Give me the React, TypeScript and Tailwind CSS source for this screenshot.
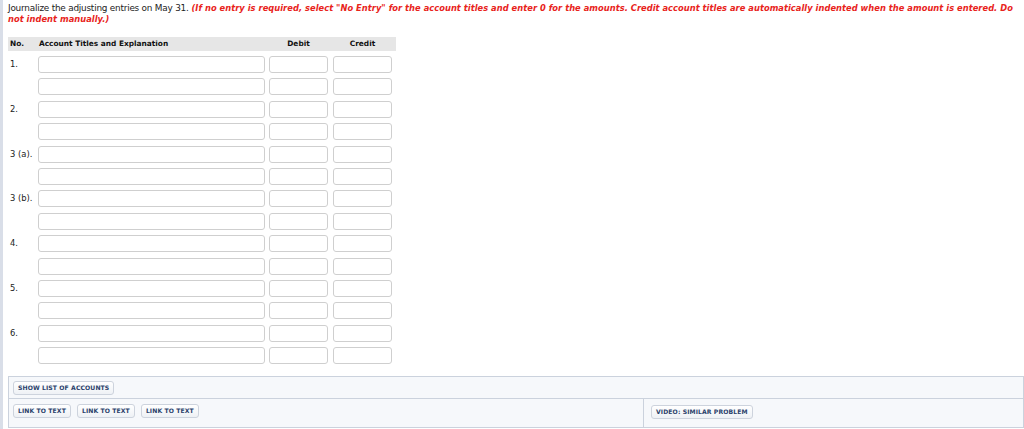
import React from 'react'

const filas = [
  { no: '1.' }, { no: '' },
  { no: '2.' }, { no: '' },
  { no: '3 (a).' }, { no: '' },
  { no: '3 (b).' }, { no: '' },
  { no: '4.' }, { no: '' },
  { no: '5.' }, { no: '' },
  { no: '6.' }, { no: '' },
]

function Boton({ children }: any) {
  return (
    <button className="h-[14px] px-[4px] rounded-[3px] border border-[#cdd3dd] bg-gradient-to-b from-white to-[#eef1f5] text-[6.1px] font-bold uppercase tracking-[0.1px] text-[#2a3f6b] leading-none whitespace-nowrap">
      {children}
    </button>
  )
}

export default function App() {
  return (
    <div className="w-[1024px] h-[429px] bg-white flex font-['DejaVu_Sans',Verdana,sans-serif] overflow-hidden">
      <div className="w-[3px] bg-[#d9dee8] shrink-0" />
      <div className="flex-1 pl-[4px] pt-[3px]">
        {/* INSTRUCCIONES */}
        <p className="text-[8.9px] leading-[11px] text-[#222] pr-[3px] pl-[1px]">
          <span className="tracking-[-0.22px]">Journalize the adjusting entries on May 31.</span>{' '}
          <span className="text-[8.3px] leading-[11px] tracking-[0.04px] text-[#e8231b] font-bold italic">
            (If no entry is required, select "No Entry" for the account titles and enter 0 for the amounts. Credit account titles are automatically indented when the amount is entered. Do not indent manually.)
          </span>
        </p>

        {/* TABLA */}
        <div className="w-[388px] mt-[12px] ml-[1px]">
          <div className="h-[14px] bg-[#e6e6e6] flex items-center text-[7.4px] font-bold text-[#111]">
            <div className="w-[30px] pl-[2px]">No.</div>
            <div className="w-[231px] pl-[1px]">Account Titles and Explanation</div>
            <div className="w-[59px] text-center">Debit</div>
            <div className="w-[5px]" />
            <div className="w-[59px] text-center">Credit</div>
          </div>
          <div className="flex flex-col gap-[5.4px] mt-[5px]">
            {filas.map((f, i) => (
              <div key={i} className="flex h-[17px]">
                <div className="w-[30px] pl-[2px] pt-[3px] text-[8.4px] leading-[10px] text-[#222] whitespace-nowrap">{f.no}</div>
                <input type="text" className="w-[227px] h-[17px] rounded-[3px] border border-[#cfcfcf] bg-white outline-none" />
                <div className="w-[4px]" />
                <input type="text" className="w-[59px] h-[17px] rounded-[3px] border border-[#cfcfcf] bg-white outline-none" />
                <div className="w-[5px]" />
                <input type="text" className="w-[59px] h-[17px] rounded-[3px] border border-[#cfcfcf] bg-white outline-none" />
              </div>
            ))}
          </div>
        </div>

        {/* PIE */}
        <div className="mt-[12px] ml-[1px] border border-[#cbd2dd] bg-[#f6f8fb]">
          <div className="h-[22px] flex items-center pl-[4px] border-b border-[#cbd2dd]">
            <Boton>Show list of accounts</Boton>
          </div>
          <div className="h-[28px] flex">
            <div className="w-[635px] flex items-start pt-[5px] pl-[4px] gap-[6px] border-r border-[#cbd2dd]">
              <Boton>Link to text</Boton>
              <Boton>Link to text</Boton>
              <Boton>Link to text</Boton>
            </div>
            <div className="flex items-start pt-[6px] pl-[7px]">
              <Boton>Video: Similar Problem</Boton>
            </div>
          </div>
        </div>
      </div>
    </div>
  )
}
